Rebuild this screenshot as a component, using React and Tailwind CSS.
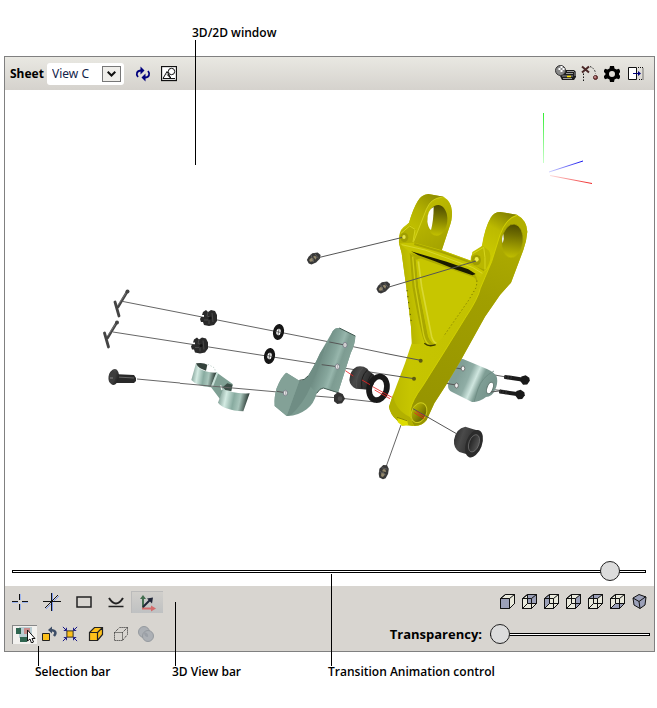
import React from "react";

const CREAM = "#e9e9dc";
const FACE = "#9ba0b8";

const cubeFaces = {
  front: "0.5,4.5 9.5,4.5 9.5,14.5 0.5,14.5",
  back: "5.5,0.5 14.5,0.5 14.5,9.5 5.5,9.5",
  left: "0.5,4.5 5.5,0.5 5.5,9.5 0.5,14.5",
  right: "9.5,4.5 14.5,0.5 14.5,9.5 9.5,14.5",
  top: "0.5,4.5 5.5,0.5 14.5,0.5 9.5,4.5",
  bottom: "0.5,14.5 5.5,9.5 14.5,9.5 9.5,14.5",
};

function CubeIcon({ face }) {
  if (face === "iso") {
    return (
      <svg width="16" height="16" viewBox="0 0 16 16" stroke="#111" strokeWidth="1" strokeLinejoin="round">
        <path d="M1 4 7 .5l7 2.500-1 8-5 3.500-6-3.500z" fill={FACE} />
        <path d="M1 4l6 3.500 7-5M7 7.500l1 7" fill="none" />
      </svg>
    );
  }
  return (
    <svg width="16" height="16" viewBox="0 0 16 16" stroke="#111" strokeWidth="1">
      <path d="M.5 4.500l5-4h9v9l-5 5h-9z" fill={CREAM} />
      <polygon points={cubeFaces[face]} fill={FACE} stroke="none" />
      <path d="M.5 4.500h9v10h-9zM.5 4.500l5-4h9v9l-5 5M9.500 4.500l5-4" fill="none" />
      {face !== "front" && <path d="M5.500.5v9h9M5.500 9.500l-5 5" fill="none" />}
    </svg>
  );
}

function IconButton({ label, className = "", children }) {
  return (
    <button type="button" aria-label={label} className={"flex shrink-0 items-center justify-center " + className}>
      {children}
    </button>
  );
}

const rangeStyle =
  "h-5 appearance-none bg-transparent [&::-webkit-slider-runnable-track]:h-[3px] [&::-webkit-slider-runnable-track]:border [&::-webkit-slider-runnable-track]:border-black [&::-webkit-slider-runnable-track]:bg-white [&::-webkit-slider-thumb]:mt-[-10px] [&::-webkit-slider-thumb]:ml-[-1px] [&::-webkit-slider-thumb]:h-5 [&::-webkit-slider-thumb]:w-5 [&::-webkit-slider-thumb]:appearance-none [&::-webkit-slider-thumb]:rounded-full [&::-webkit-slider-thumb]:border [&::-webkit-slider-thumb]:border-[#222] [&::-webkit-slider-thumb]:bg-[#dcdcdc]";

function Callout({ text, line, className = "" }) {
  return (
    <div className={"relative whitespace-nowrap text-xs leading-4 font-semibold " + className}>
      <span aria-hidden="true" className={"pointer-events-none absolute left-[3px] w-px bg-black " + line} />
      {text}
    </div>
  );
}

function CastleNut({ x, y }) {
  return (
    <g transform={`translate(${x} ${y})`}>
      <path d="M-6-6l3-2 2 2 3-2 4 1 2 4 0 6-3 4-5 1-5-1-1-3-2 0-1-3 1-2h3l0-2-2 0z" fill="#292929" />
      <path d="M-1-6l-1 4 3 1M-5 2h4M0 2v4M3-5l1 9" stroke="#4a4a4a" fill="none" />
      <circle cx="1" cy="0" r="1.5" fill="#111" />
    </g>
  );
}

function Washer({ x, y }) {
  return (
    <g transform={`translate(${x} ${y}) rotate(10)`}>
      <ellipse rx="5.5" ry="8" fill="#161616" />
      <ellipse rx="2.2" ry="3.2" fill="#fff" />
      <path d="M-3 0h6M0-3v6" stroke="#555" strokeWidth=".8" />
    </g>
  );
}

function CotterPin({ x, y }) {
  return (
    <g transform={`translate(${x} ${y})`} strokeLinecap="round" fill="none">
      <path d="M9-12 0 3" stroke="#444" strokeWidth="2.600" />
      <path d="M-3-2 1 12" stroke="#444" strokeWidth="2.800" />
      <path d="M8-11 0 1" stroke="#888" strokeWidth=".7" />
      <circle cx="9.500" cy="-12.500" r="2" fill="#444" />
    </g>
  );
}

function GreaseFitting({ x, y }) {
  return (
    <g transform={`translate(${x} ${y}) rotate(-28)`}>
      <path d="M-7-2l3-2 5-1.500 5 2 1.500 3.500-2.500 3-5 1.500-5-.5-2-2z" fill="#383838" />
      <path d="M-5-1l3-1 1.500 2-1.500 2-3-1zM0-2l2 0 1 2-2 2z" fill="#94886b" />
      <path d="M-1-5l-1 8M3-4l1 6" stroke="#666" strokeWidth=".7" />
    </g>
  );
}

function Bolt({ x, y }) {
  return (
    <g transform={`translate(${x} ${y}) rotate(9)`}>
      <rect x="-11" y="-2" width="19" height="4" rx="1" fill="#1b1b1b" />
      <path d="M6-3l4-2 4 2 1 3-2 4-4 1-3-3z" fill="#191919" />
      <path d="M-10-2v4M-7-2v4M-4-2v4" stroke="#444" strokeWidth=".6" />
    </g>
  );
}

/* Yellow support arm, drawn on a grid three times finer than the scene. */
function SupportArm() {
  return (
    <g transform="translate(385 190) scale(.33333)">
      <path
        d="M42 160Q40 125 55 112L72 98Q85 55 98 34 108 14 130 12L176 20Q200 35 201 66 202 90 192 115L170 180 258 212 262 186 292 167Q300 112 318 82 328 66 346 66L396 74Q425 90 427 125 425 152 415 180L378 278 345 315 300 380 225 515 180 590 148 640 125 690Q110 710 85 708L66 706 50 703 35 690Q15 672 12 650L22 620 60 520 80 460 78 410 65 300 50 190Z"
        fill="url(#arm)"
      />
      {/* left lug */}
      <path d="M66 104L72 98Q85 55 98 34 108 14 130 12L176 20Q140 22 124 58L85 156Z" fill="url(#lugLeft)" />
      <path d="M85 158L124 58Q138 24 170 22 199 30 201 66 202 90 192 115L170 182Z" fill="url(#lugFace)" />
      <path d="M86 155L124 58Q138 24 170 22" stroke="#dcdb2c" strokeWidth="2" fill="none" />
      <ellipse cx="157" cy="91" rx="30" ry="46" fill="url(#boreB)" transform="rotate(5 157 91)" />
      <path d="M146 51Q126 60 127 95 130 115 138 120 146 90 146 51Z" fill="#fff" />
      {/* right lug and flank */}
      <path d="M290 170Q300 112 318 82 328 66 346 66L396 74Q362 82 345 135L313 235 298 245Z" fill="url(#lugRight)" />
      <path
        d="M396 76Q425 90 427 125 425 152 415 180L378 278 345 315 300 380 225 515 180 590 148 640 125 690Q112 708 88 707 72 690 76 660 82 630 112 590L180 482 240 385Q280 325 286 295L300 262 320 215 345 135Q362 86 396 76Z"
        fill="url(#flank)"
      />
      <path d="M396 76Q362 86 345 135L320 215 300 262 286 295Q280 325 240 385L180 482 112 590Q82 630 76 660 74 680 80 698" stroke="#d6d500" strokeWidth="2.500" fill="none" />
      <ellipse cx="382" cy="153" rx="32" ry="51" fill="url(#boreB)" stroke="#aeac00" strokeWidth="2" transform="rotate(7 382 153)" />
      <path d="M355 132q-7 14-2 28 6-14 2-28z" fill="#eee" />
      {/* cross bar */}
      <path d="M42 160L50 152 90 158 168 180 258 212 300 243 286 262 272 252 76 186Z" fill="#c6c500" />
      <path d="M88 162L170 186 262 219 298 241" stroke="#a6a400" strokeWidth="6" fill="none" />
      <path d="M50 164L120 180 262 232 292 250" stroke="#d8d72a" strokeWidth="3" fill="none" />
      {/* left flange */}
      <path d="M42 160L74 186 82 290 112 440 125 462 82 462 78 410 65 300 50 190Z" fill="url(#flange)" />
      {/* pocket */}
      <path d="M76 188L268 252Q278 262 276 275L92 208Z" fill="#aeac00" />
      <path d="M74 188L92 208 100 290 128 430Q132 455 150 466 130 472 118 455 108 435 82 290Z" fill="#a9a700" />
      <path d="M94 215Q96 204 110 206L255 258Q278 262 274 284L255 325 175 440 152 464Q130 455 127 430L100 290Z" fill="#c7c600" />
      <path d="M100 214L110 290 140 440Q145 456 154 460" stroke="#d9d832" strokeWidth="5" fill="none" />
      <path d="M83 200L91 290 116 435Q122 460 134 465" stroke="#cfce10" strokeWidth="4" fill="none" />
      <path d="M78 184L185 215 250 238 272 252 262 256 210 238 150 214 100 196Z" fill="#1a1a00" />
      <path d="M118 460Q132 472 152 464" stroke="#3c3b00" strokeWidth="4" fill="none" />
      <path d="M276 272L274 292 250 332 175 440" stroke="#626000" strokeWidth="2.500" strokeDasharray="3 8" fill="none" />
      <path d="M66 300L80 405" stroke="#5a5900" strokeWidth="3" strokeDasharray="4 14" />
      {/* grease bosses */}
      <path d="M42 160Q42 128 52 120L74 104 92 118 84 158Z" fill="#b3b100" />
      <path d="M48 130L74 108 90 118M84 156L90 120" stroke="#d6d51c" strokeWidth="3" fill="none" />
      <ellipse cx="58" cy="142" rx="12" ry="14" fill="#a09e00" />
      <ellipse cx="57" cy="141" rx="5" ry="6" fill="#e5e450" />
      <path d="M258 224Q254 196 266 188L294 168 312 182Q324 205 302 240Z" fill="#b9b700" />
      <path d="M262 192L296 172Q302 200 300 238" stroke="#d6d51c" strokeWidth="3" fill="none" />
      <ellipse cx="274" cy="210" rx="14" ry="16" fill="#a09e00" />
      <ellipse cx="275" cy="208" rx="6" ry="7" fill="#efee50" />
      {/* lower eye */}
      <path d="M12 650L24 615Q30 660 76 682L86 708 50 703 35 690Q15 672 12 650Z" fill="#b2b000" />
      <path d="M38 684L66 690 70 706 52 708 38 696Z" fill="#dddc00" />
      <path d="M36 682L66 692" stroke="#8a8800" strokeWidth="3" />
      <ellipse cx="102" cy="668" rx="22" ry="31" fill="url(#bore)" stroke="#cdcc1c" strokeWidth="3" transform="rotate(24 102 668)" />
      <g stroke="#555" strokeWidth="3">
        <path d="M0 490L107 511M0 553L87 566M84 656L216 732" />
      </g>
      <path d="M88 668L118 686M94 664L120 680" stroke="#e22" strokeWidth="2.500" />
      <ellipse cx="107" cy="512" rx="6" ry="6" fill="#5d5b10" />
      <ellipse cx="87" cy="566" rx="6" ry="6" fill="#5d5b10" />
    </g>
  );
}

/* Clamp, bracket, bushings and nut, on the same fine grid. */
function SmallParts() {
  return (
    <g transform="translate(180 320) scale(.33333)">
      {/* double clamp */}
      <path d="M108 156L158 192 154 208 132 200 122 240 92 200Z" fill="#7fa094" />
      <path d="M48 130Q58 158 110 158L92 202Q50 198 34 180Z" fill="url(#clamp)" />
      <path d="M48 130Q70 126 82 134L78 152Q54 146 48 130Z" fill="#34423c" />
      <path d="M84 133L104 144 106 156" stroke="#8aa99e" strokeWidth="2" strokeDasharray="3 6" fill="none" />
      <path d="M112 158L96 200" stroke="#c8e0d8" strokeWidth="6" />
      <path d="M130 204Q150 222 209 220L190 274Q130 270 114 248Z" fill="url(#clamp)" />
      <path d="M128 202L142 190 158 194 154 214 136 210Z" fill="#3b4f47" />
      <path d="M122 196L126 210" stroke="#f4f4f4" strokeWidth="4" />
      <path d="M0 190L316 218" stroke="#666" strokeWidth="3" />

      {/* angled bracket */}
      <path
        d="M458 34Q466 22 478 24L526 48Q526 70 512 100L474 218 430 204Q420 204 410 220 402 252 380 268 350 290 320 288L284 258Q282 230 290 205 302 172 320 158L358 182Q374 182 384 168 402 140 420 100Z"
        fill="#7b9a90"
      />
      <path d="M458 34Q466 22 478 24L526 48Q526 70 512 100L474 218 430 204Q420 204 410 220L392 200Q412 150 458 34Z" fill="url(#teal)" />
      <path d="M358 182Q374 182 384 168 402 140 420 100L440 70Q420 140 392 200 370 250 334 284L320 288Z" fill="#6f8d84" />
      <path d="M318 158L358 182L320 288 284 258Q282 230 290 205 302 172 318 158Z" fill="#83a197" />
      <path d="M358 181Q374 182 384 168M410 220Q420 204 430 204L474 218M478 24L526 48" stroke="#435a52" strokeWidth="3" fill="none" />
      <path d="M448 66L494 75M425 134L472 140M290 214L316 218" stroke="#555" strokeWidth="3" />
      {[[495, 75], [472, 140], [316, 219]].map(([x, y]) => (
        <g key={x}>
          <ellipse cx={x} cy={y} rx="6" ry="8" fill="#f2f2f2" stroke="#667" strokeWidth="2" />
          <path d={`M${x} ${y - 6}v12`} stroke="#888" strokeWidth="2" />
        </g>
      ))}

      {/* hex nut */}
      <path d="M462 226L474 216 488 222 495 236 486 250 472 252 462 244Z" fill="#333" />
      <circle cx="480" cy="236" r="7" fill="#4c4c4c" />

      {/* shouldered bushing */}
      <path d="M508 180Q510 150 530 140 548 136 562 146L566 152 582 164Q588 190 570 210L548 208 528 206Q510 198 508 180Z" fill="url(#steel)" />
      <path d="M562 150Q540 170 546 206M576 162Q560 180 562 206" stroke="#1c1c1c" strokeWidth="3" fill="none" />
      <path d="M550 142Q524 168 530 204" stroke="#555" strokeWidth="2" fill="none" />
      <ellipse cx="594" cy="205" rx="26" ry="36" fill="none" stroke="#191919" strokeWidth="17" transform="rotate(16 594 205)" />
      <path d="M496 152L520 168M546 180L570 194M578 200L636 232M584 210L630 236" stroke="#e22" strokeWidth="2.500" />

      {/* flanged bushing */}
      <path d="M822 360Q828 325 856 320L880 328 896 332 866 404 838 396Q820 384 822 360Z" fill="url(#steel)" />
      <ellipse cx="882" cy="371" rx="24" ry="43" fill="#2b2b2b" transform="rotate(20 882 371)" />
      <ellipse cx="882" cy="370" rx="15" ry="27" fill="url(#boreDark)" stroke="#777" strokeWidth="2" transform="rotate(20 882 370)" />
    </g>
  );
}

function Scene() {
  return (
    <svg viewBox="5 90 649 468" className="block h-auto w-full" role="img" aria-label="Exploded assembly">
      <defs>
        <linearGradient id="axisZ" x1="0" y1="0" x2="0" y2="1">
          <stop offset="0" stopColor="#33ee33" /><stop offset="1" stopColor="#c8ffc8" />
        </linearGradient>
        <linearGradient id="axisY" gradientUnits="userSpaceOnUse" x1="549" y1="172" x2="583" y2="161">
          <stop offset="0" stopColor="#d5d5ff" /><stop offset="1" stopColor="#1111ee" />
        </linearGradient>
        <linearGradient id="axisX" gradientUnits="userSpaceOnUse" x1="550" y1="175" x2="592" y2="184">
          <stop offset="0" stopColor="#ffe0e0" /><stop offset="1" stopColor="#ee2222" />
        </linearGradient>
        <linearGradient id="lugLeft" gradientUnits="userSpaceOnUse" x1="80" y1="130" x2="160" y2="20">
          <stop offset="0" stopColor="#c3c200" /><stop offset=".5" stopColor="#b4b200" /><stop offset="1" stopColor="#8f8d00" />
        </linearGradient>
        <linearGradient id="lugFace" gradientUnits="userSpaceOnUse" x1="100" y1="60" x2="180" y2="180">
          <stop offset="0" stopColor="#bdbb00" /><stop offset="1" stopColor="#a3a100" />
        </linearGradient>
        <linearGradient id="lugRight" gradientUnits="userSpaceOnUse" x1="300" y1="200" x2="370" y2="70">
          <stop offset="0" stopColor="#cccb00" /><stop offset=".6" stopColor="#bcba00" /><stop offset="1" stopColor="#858300" />
        </linearGradient>
        <linearGradient id="flank" gradientUnits="userSpaceOnUse" x1="350" y1="90" x2="150" y2="640">
          <stop offset="0" stopColor="#b1af00" /><stop offset=".4" stopColor="#a19f00" /><stop offset="1" stopColor="#979500" />
        </linearGradient>
        <linearGradient id="flange" gradientUnits="userSpaceOnUse" x1="60" y1="300" x2="100" y2="295">
          <stop offset="0" stopColor="#b6b400" /><stop offset="1" stopColor="#c9c800" />
        </linearGradient>
        <linearGradient id="bore" x1="0" y1="0" x2="1" y2=".3">
          <stop offset="0" stopColor="#bdbb00" /><stop offset=".45" stopColor="#9b9900" /><stop offset="1" stopColor="#6b6900" />
        </linearGradient>
        <linearGradient id="boreB" x1="0" y1="0" x2="0" y2="1">
          <stop offset="0" stopColor="#4e4c00" /><stop offset=".3" stopColor="#6e6c00" /><stop offset=".7" stopColor="#9f9d00" /><stop offset="1" stopColor="#c2c000" />
        </linearGradient>
        <linearGradient id="boreDark" x1="0" y1="0" x2="1" y2="0">
          <stop offset="0" stopColor="#222" /><stop offset="1" stopColor="#555" />
        </linearGradient>
        <linearGradient id="arm" x1="0" y1="0" x2="1" y2="0">
          <stop offset="0" stopColor="#b9b700" /><stop offset=".15" stopColor="#c6c500" /><stop offset="1" stopColor="#c0bf00" />
        </linearGradient>
        <linearGradient id="teal" gradientUnits="userSpaceOnUse" x1="425" y1="110" x2="510" y2="140">
          <stop offset="0" stopColor="#718f86" /><stop offset=".35" stopColor="#86a69c" /><stop offset=".5" stopColor="#97b6ac" /><stop offset=".65" stopColor="#7d9c92" /><stop offset="1" stopColor="#86a59a" />
        </linearGradient>
        <linearGradient id="tealBend" gradientUnits="userSpaceOnUse" x1="458" y1="375" x2="490" y2="389">
          <stop offset="0" stopColor="#819f97" /><stop offset=".3" stopColor="#8fada5" /><stop offset=".5" stopColor="#cfe6df" /><stop offset=".68" stopColor="#7f9e95" /><stop offset="1" stopColor="#78968e" />
        </linearGradient>
        <linearGradient id="clamp" x1="0" y1="0" x2="1" y2=".15">
          <stop offset="0" stopColor="#65867c" /><stop offset=".3" stopColor="#d4ebe3" /><stop offset=".55" stopColor="#88aba0" /><stop offset=".75" stopColor="#a9c6bc" /><stop offset="1" stopColor="#2f3f39" />
        </linearGradient>
        <linearGradient id="steel" x1="0" y1="0" x2="1" y2=".4">
          <stop offset="0" stopColor="#262626" /><stop offset=".4" stopColor="#4a4a4a" /><stop offset="1" stopColor="#262626" />
        </linearGradient>
      </defs>

      {/* orientation axes */}
      <rect x="543" y="113" width="1" height="50" fill="url(#axisZ)" />
      <path d="M549 172l34-11" stroke="url(#axisY)" />
      <path d="M550 175.500l42 8" stroke="url(#axisX)" />

      {/* explode paths behind the parts */}
      <g stroke="#666" strokeWidth="1" fill="none">
        <path d="M123 301.500 345 345M113 332 337 367M137 379 180 383M315 396l24 2 36 4" />
        <path d="M345 345L385 353.300M337 367L385 374.300M444 366l62 11M440 382l64 9" />
        <path d="M401 425l-15 42" />
      </g>

      {/* cotter pins, castle nuts and washers */}
      <CotterPin x={118} y={304} />
      <CotterPin x={107.5} y={335} />
      <CastleNut x={209} y={318} />
      <CastleNut x={200} y={345.5} />
      <Washer x={278.5} y={332} />
      <Washer x={269.5} y={356} />

      {/* round head bolt */}
      <path d="M113 374l21 1 2 3v3l-2 2-20 0z" fill="#292929" />
      <path d="M117 377l17 1" stroke="#666" />
      <ellipse cx="114" cy="377" rx="5" ry="8" fill="url(#steel)" transform="rotate(8 114 377)" />
      <ellipse cx="112" cy="377" rx="3.5" ry="6.500" fill="#3d3d3d" transform="rotate(8 112 377)" />
      <path d="M110 378h3" stroke="#888" />

      <SmallParts />

      {/* right hand bracket */}
      <path d="M448 386l1-8 7-16q2-4 7-3l24 10q9 4 10 9 1 6-2 12-3 7-9 7-6 5-14 5l-20-10q-4-2-4-6z" fill="url(#tealBend)" />
      <path d="M494 371q-12 6-16 18l-4 13" stroke="#6b8980" strokeWidth=".8" fill="none" />
      <ellipse cx="490" cy="388" rx="3" ry="6" fill="#fff" stroke="#60766f" transform="rotate(20 490 388)" />
      <path d="M450 367l12 2M444 383l12 2M491 392l8-1" stroke="#555" />
      <ellipse cx="463" cy="368.5" rx="1.800" ry="2.500" fill="#f1f1f1" stroke="#555" strokeWidth=".7" />
      <ellipse cx="456.5" cy="385.5" rx="1.800" ry="2.500" fill="#f1f1f1" stroke="#555" strokeWidth=".7" />
      <Bolt x={515} y={378.5} />
      <Bolt x={510} y={393} />

      <SupportArm />

      {/* grease fittings */}
      <path d="M319 257.500l83-20M389 287l87-26" stroke="#555" />
      <GreaseFitting x={314} y={258.5} />
      <GreaseFitting x={383.5} y={287.5} />
      <g transform="rotate(-38 384 472)"><GreaseFitting x={384} y={472} /></g>
    </svg>
  );
}

function TopBar() {
  return (
    <div className="flex h-[33px] items-center bg-gradient-to-b from-[#e9e8e2] to-[#d5d2cd] pr-[10px] pl-[5px]">
      <label htmlFor="sheet" className="w-[37px] text-xs leading-4 font-bold [font-family:'Noto_Sans',sans-serif]">Sheet</label>
      <div className="relative flex">
        <select id="sheet" className="h-[22px] w-[77px] appearance-none rounded-[3px] bg-white pl-[5px] text-xs leading-4 text-[#12234a] [font-family:'Noto_Sans',sans-serif]">
          <option>View C</option>
        </select>
        <span className="pointer-events-none absolute top-[3px] right-[3px] flex h-4 w-[19px] items-center justify-center border border-[#777] bg-[#efeeea]">
          <svg width="9" height="6" viewBox="0 0 9 6" fill="none" stroke="#111" strokeWidth="2"><path d="M.7.8l3.800 3.700L8.300.8" /></svg>
        </span>
      </div>
      <IconButton label="Refresh" className="ml-[11px]">
        <svg width="16" height="16" viewBox="0 0 16 16" fill="none" stroke="#00007d" strokeWidth="1.800">
          <path d="M3 11C.5 8 2 4.500 6 4.500M13 5c2.500 3 1 6.500-3 6.500" />
          <path d="M5.500.5v8L9.500 4.500zM10.500 7.500v8L6.500 11.500z" fill="#00007d" stroke="none" />
        </svg>
      </IconButton>
      <IconButton label="Shapes" className="ml-[10px]">
        <svg width="16" height="16" viewBox="0 0 16 16" fill="none" stroke="#111">
          <rect x=".5" y=".5" width="15" height="14" fill="#fff" strokeWidth="1.300" />
          <circle cx="10.5" cy="5.5" r="3.200" />
          <path d="M2 12.500l4-7 4 7zM6 8.500l4 4h4M7 8l3 4.500" />
        </svg>
      </IconButton>
      <div className="ml-auto flex items-center">
        <IconButton label="Render">
          <svg width="22" height="17" viewBox="0 0 22 17">
            <path d="M9 5h10l2 2v5l-2 3H7l-2-4z" fill="#1c1c1c" />
            <path d="M12 6.500h7M11 8.500h7M7 11h11M8 13.500h9M20 7v4" stroke="#bbb" strokeWidth=".8" fill="none" />
            <path d="M12 11.500h4" stroke="#ffe600" strokeWidth="1.500" />
            <circle cx="5.5" cy="5.5" r="5" fill="#888" stroke="#333" />
            <path d="M3.500 3h2v2h-2zM5.500 1h2v2h-2zM7.500 3h2v2h-2zM5.500 5h2v2h-2z" fill="#fff" />
          </svg>
        </IconButton>
        <IconButton label="Path" className="ml-1">
          <svg width="18" height="17" viewBox="0 0 18 17" fill="none">
            <path d="M1 1.500l7 6M8 1.500l-7 6" stroke="#4a2828" strokeWidth="2" />
            <path d="M2.500 16V8M9 1.500q5 2 5.500 7" stroke="#111" strokeDasharray="1.500 1.500" />
            <circle cx="14.5" cy="12.5" r="2" fill="#8d4848" stroke="#4a2020" /><circle cx="14" cy="12" r=".8" fill="#ecc" />
          </svg>
        </IconButton>
        <IconButton label="Settings" className="ml-[5px]">
          <svg width="16" height="16" viewBox="0 0 16 16" fill="#000">
            <path fillRule="evenodd" d="M6 0h4l.5 2.500 2 1L15 2.700l1.500 3L15 7.500v1l1.500 2-1.500 2.800-2.500-.8-2 1L10 16H6l-.5-2.500-2-1-2.500.8-1.500-2.800 2-2v-1l-2-2L1 2.700l2.500.8 2-1zM8 5a3 3 0 1 0 0 6 3 3 0 0 0 0-6z" />
          </svg>
        </IconButton>
        <IconButton label="Exit" className="ml-2">
          <svg width="16" height="14" viewBox="0 0 16 14" fill="none" stroke="#111">
            <path d="M.5.5h8v12h-8z" fill="#fff" />
            <path d="M10 .5h5v12h-5" strokeDasharray="1 1" />
            <path d="M5 6.500h7" stroke="#00007d" /><path d="M10 4v5l3-2.500z" fill="#00007d" stroke="none" />
          </svg>
        </IconButton>
      </div>
    </div>
  );
}

function BottomBar() {
  return (
    <div className="flex flex-col gap-[10px] bg-[#d8d5d0] pt-[5px] pb-[6px] pl-[7px]">
      <div className="flex h-[22px] items-center pr-[6px]">
        <div className="flex gap-4">
          <IconButton label="Crosshair">
            <svg width="16" height="16" viewBox="0 0 16 16" fill="none">
              <path d="M8.500 0v6M8.500 10v6M0 8.500h6M10 8.500h6" stroke="#9db4ee" /><path d="M7.500 0v6M7.500 10v6M0 7.500h6M10 7.500h6" stroke="#111" />
            </svg>
          </IconButton>
          <IconButton label="Axes">
            <svg width="18" height="18" viewBox="0 0 18 18" fill="none" className="mx-[-1px]">
              <path d="M9.500 0v18M3 16L16 3" stroke="#7a96ee" /><path d="M0 8.500h18M8.500 0v18M2 15L15 2" stroke="#111" />
            </svg>
          </IconButton>
          <IconButton label="Plane">
            <svg width="16" height="16" viewBox="0 0 16 16" fill="none"><rect x="1" y="3" width="14" height="10" stroke="#222" strokeWidth="1.500" /></svg>
          </IconButton>
          <IconButton label="Horizon">
            <svg width="16" height="16" viewBox="0 0 16 16" fill="none" stroke="#222"><path d="M1 4q7 11 14 0" strokeWidth="2" /><path d="M.5 12.500h15" strokeWidth="1.500" /></svg>
          </IconButton>
        </div>
        <IconButton label="3D axes" className="ml-[7px] h-[22px] w-8 border-t border-l border-[#bbb] bg-gradient-to-b from-[#d1cfcb] to-[#bfc1c2]">
          <svg width="18" height="18" viewBox="0 0 18 18" fill="none">
            <path d="M4 14V5" stroke="#436e50" strokeWidth="2" /><path d="M4 1L1 5h6z" fill="#436e50" />
            <path d="M3 14.500h10" stroke="#d46b6b" strokeWidth="2" /><path d="M12 11.500v6l5-3z" fill="#d46b6b" />
            <path d="M4 13l7-7" stroke="#202638" strokeWidth="2" /><path d="M14 3.500l-6 1 5 5z" fill="#202638" />
          </svg>
        </IconButton>
        <div className="ml-auto flex gap-[6px]">
          {["front", "back", "left", "right", "top", "bottom", "iso"].map((face) => (
            <IconButton key={face} label={face + " view"}><CubeIcon face={face} /></IconButton>
          ))}
        </div>
      </div>
      <div className="flex h-[22px] items-center pr-[4px]">
        <IconButton label="Select parts" className="h-[19px] w-[25px] border-t border-l border-[#888] bg-[#f2f1ee]">
          <svg width="22" height="17" viewBox="0 0 22 17">
            <path d="M5 1h13v11H5z" fill="#b9cdd2" /><path d="M2 2h5v6H2zM6 11h7v5H6z" fill="#2f6550" />
            <path d="M10 2h6v6h-6z" fill="#c88c8c" />
            <path d="M13.500 4v11l2.500-2 1.500 4 2-1-1.500-3.500h3z" fill="#fff" stroke="#111" />
          </svg>
        </IconButton>
        <IconButton label="Move back" className="ml-1">
          <svg width="18" height="18" viewBox="0 0 18 18" fill="none">
            <path d="M1.500 8.500h7v7h-7z" fill="#fdc01a" stroke="#222" />
            <path d="M10 5q7 1 3 6" stroke="#3d4d66" strokeWidth="2.500" /><path d="M7 5l4-3.500v7z" fill="#3d4d66" />
          </svg>
        </IconButton>
        <IconButton label="Fit selection" className="ml-[3px]">
          <svg width="16" height="16" viewBox="0 0 18 18" fill="none">
            <path d="M5.500 5.500h7v7h-7z" fill="#fdc01a" stroke="#222" />
            <path d="M1 1l4 4M17 1l-4 4M1 17l4-4M17 17l-4-4M5 2v3H2M13 2v3h3M5 16v-3H2M13 16v-3h3" stroke="#00007d" />
          </svg>
        </IconButton>
        <div className="ml-[9px] flex gap-[7px]">
          <IconButton label="Show">
            <svg width="18" height="18" viewBox="0 0 18 18" fill="#fdc01a" stroke="#222"><path d="M2.500 7.500l5-5h8v7l-5 6h-8zM10.500 7.500l5-5M2.500 7.500h8v8" strokeWidth="1.200" /></svg>
          </IconButton>
          <IconButton label="Hide">
            <svg width="18" height="18" viewBox="0 0 18 18" fill="none" stroke="#222"><path d="M2.500 7.500l5-5h8v7l-5 6h-8zM10.500 7.500l5-5M2.500 7.500h8v8" strokeDasharray="1 1" /></svg>
          </IconButton>
          <IconButton label="Ghost">
            <svg width="18" height="18" viewBox="0 0 18 18" fill="#acb0b5" stroke="#959a9f"><circle cx="7" cy="7" r="5.5" /><circle cx="11" cy="11" r="5.5" /><path d="M7 7q5 1 4 5-4 0-4-5" fill="#9ba0a7" stroke="none" /></svg>
          </IconButton>
        </div>
        <label htmlFor="transparency" className="mr-2 ml-auto text-[13px] leading-4 font-bold">Transparency:</label>
        <input id="transparency" type="range" min="0" max="100" defaultValue="0" className={"w-40 " + rangeStyle} />
      </div>
    </div>
  );
}

export default function App() {
  return (
    <main className="bg-white pr-[2px] pb-7 pl-1 text-black [font-family:'Open_Sans','Noto_Sans',sans-serif]">
      <header className="flex h-14 items-end pb-[15px] pl-[188px]">
        <Callout text="3D/2D window" line="top-[15px] h-[125px]" className="z-10" />
      </header>
      <section className="border border-[#808080]">
        <TopBar />
        <Scene />
        <div className="flex pt-[3px] pr-2 pb-[5px] pl-[7px]">
          <input aria-label="Transition animation" type="range" min="0" max="100" defaultValue="96" className={"w-full " + rangeStyle} />
        </div>
        <BottomBar />
      </section>
      <footer className="flex pt-3 pl-[31px]">
        <Callout text="Selection bar" line="bottom-[14px] h-5" className="w-[137px]" />
        <Callout text="3D View bar" line="bottom-[14px] h-16" className="w-[156px]" />
        <Callout text="Transition Animation control" line="bottom-[14px] h-[92px]" />
      </footer>
    </main>
  );
}
